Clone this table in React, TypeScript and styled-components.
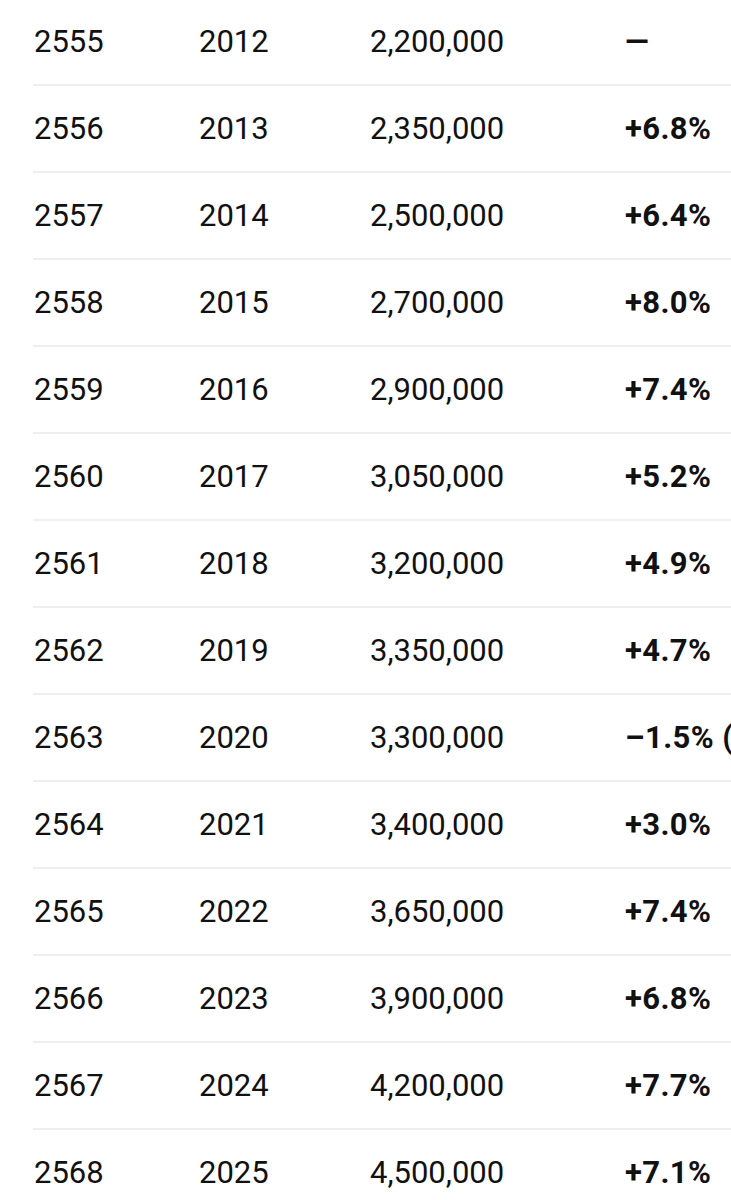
import React from "react";
import styled, { createGlobalStyle } from "styled-components";

const Global = createGlobalStyle`
  html, body { margin: 0; padding: 0; background: #ffffff; }
  body { font-family: Roboto, "Liberation Sans", Arial, sans-serif; color: #111; overflow: hidden; }
`;

const Table = styled.div`
  display: flex;
  flex-direction: column;
  margin-top: -1px;
  padding-left: 33px;
  width: calc(100% - 33px);
`;

const Row = styled.div`
  display: grid;
  grid-template-columns: 165px 171px 255px 1fr;
  align-items: center;
  height: 85px;
  border-bottom: 2px solid #efefef;
  font-size: 31px;
  white-space: nowrap;
  overflow: hidden;
`;

const Cell = styled.div<{ $bold?: boolean }>`
  padding-left: 1px;
  font-weight: ${(p) => (p.$bold ? 700 : 400)};
  letter-spacing: ${(p) => (p.$bold ? "0.4px" : "0")};
  color: #111;
`;

const data: [string, string, string, string][] = [
  ["2555", "2012", "2,200,000", "—"],
  ["2556", "2013", "2,350,000", "+6.8%"],
  ["2557", "2014", "2,500,000", "+6.4%"],
  ["2558", "2015", "2,700,000", "+8.0%"],
  ["2559", "2016", "2,900,000", "+7.4%"],
  ["2560", "2017", "3,050,000", "+5.2%"],
  ["2561", "2018", "3,200,000", "+4.9%"],
  ["2562", "2019", "3,350,000", "+4.7%"],
  ["2563", "2020", "3,300,000", "–1.5% (COVID)"],
  ["2564", "2021", "3,400,000", "+3.0%"],
  ["2565", "2022", "3,650,000", "+7.4%"],
  ["2566", "2023", "3,900,000", "+6.8%"],
  ["2567", "2024", "4,200,000", "+7.7%"],
  ["2568", "2025", "4,500,000", "+7.1%"],
];

export default function App() {
  return (
    <>
      <Global />
      <Table>
        {data.map((r) => (
          <Row key={r[0]}>
            <Cell>{r[0]}</Cell>
            <Cell>{r[1]}</Cell>
            <Cell>{r[2]}</Cell>
            <Cell $bold>{r[3]}</Cell>
          </Row>
        ))}
      </Table>
    </>
  );
}
